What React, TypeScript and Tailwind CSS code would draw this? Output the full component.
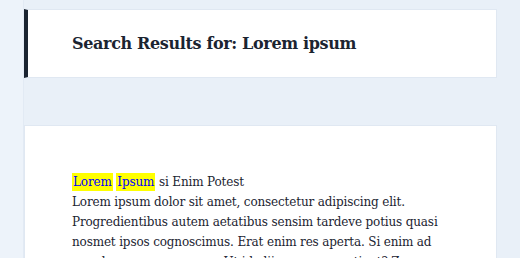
import React from "react";

const serif = { fontFamily: '"DejaVu Serif", "Liberation Serif", serif' };

export default function App() {
  return (
    <div className="flex h-[258px] w-[520px] overflow-hidden bg-[#e9f0f8]" style={serif}>
      <div className="w-6 shrink-0 border-r border-[#e2eaf4] bg-[#edf3fa]" />
      <main className="flex w-[473px] shrink-0 flex-col pt-[9px]">
        <header className="flex h-[69px] shrink-0 items-center border border-l-4 border-[#e0e8f2] border-l-[#1b2431] bg-white pl-[44px]">
          <h1 className="text-[16px] font-bold leading-none tracking-[-0.35px] text-[#1b2431]">
            Search Results for: Lorem ipsum
          </h1>
        </header>
        <article className="mt-[47px] flex-1 border border-[#e0e8f2] bg-white px-[47px] pt-[46px]">
          <div className="text-[12px] leading-[20px] tracking-[-0.15px] text-[#1b2431]">
            <p>
              <mark className="bg-[#ffff00] px-px py-[2px] text-[#0000ff]">Lorem</mark>{" "}
              <mark className="bg-[#ffff00] px-px py-[2px] text-[#0000ff]">Ipsum</mark> si Enim Potest
            </p>
            <p>
              Lorem ipsum dolor sit amet, consectetur adipiscing elit.
              Progredientibus autem aetatibus sensim tardeve potius quasi
              nosmet ipsos cognoscimus. Erat enim res aperta. Si enim ad
              populum me vocas, eum. Ut id aliis narrare gestiant? Zeno igitur
              ne quaerimus.
            </p>
          </div>
        </article>
      </main>
    </div>
  );
}
